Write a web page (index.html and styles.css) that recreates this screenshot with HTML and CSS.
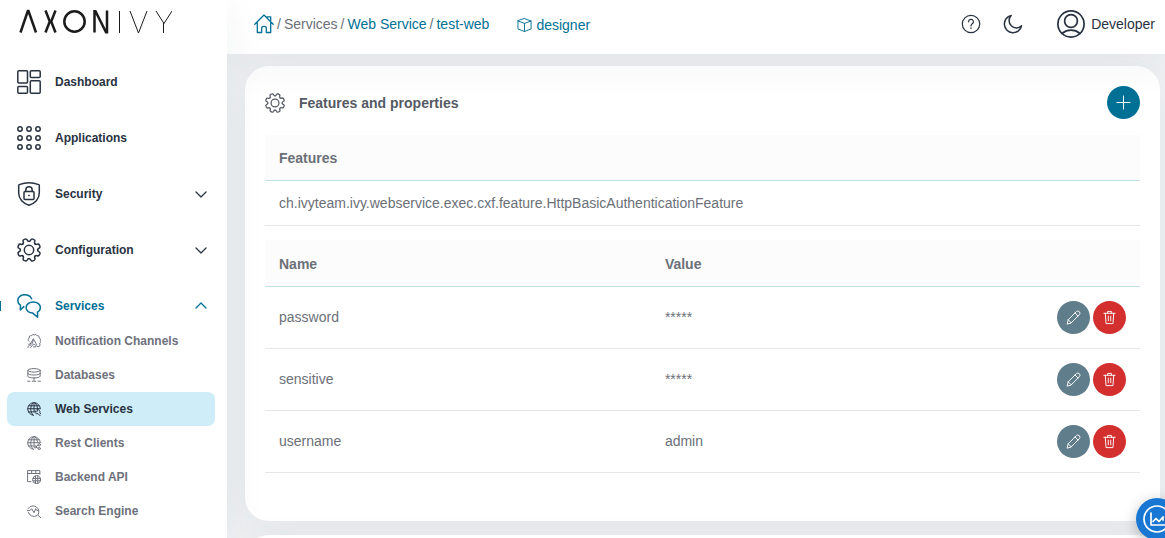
FILE: index.html
```html
<!DOCTYPE html>
<html lang="en">
<head>
<meta charset="utf-8">
<title>test-web</title>
<link rel="stylesheet" href="styles.css">
</head>
<body>
<svg class="defs" aria-hidden="true">
  <defs>
    <path id="tooth" d="M12 3.4Q13.2 3.4 13.6 2.2Q14.3.6 15.7 1.1L16.9 1.6Q18.3 2.2 17.7 3.8Q17.2 5 18.1 5.9"/>
    <symbol id="gear" viewBox="0 0 24 24">
      <use href="#tooth"/><use href="#tooth" transform="rotate(45 12 12)"/><use href="#tooth" transform="rotate(90 12 12)"/><use href="#tooth" transform="rotate(135 12 12)"/><use href="#tooth" transform="rotate(180 12 12)"/><use href="#tooth" transform="rotate(225 12 12)"/><use href="#tooth" transform="rotate(270 12 12)"/><use href="#tooth" transform="rotate(315 12 12)"/>
      <circle cx="12" cy="12" r="4.7"/>
    </symbol>
    <symbol id="down" viewBox="0 0 12 12"><path d="M1 4l5 5 5-5"/></symbol>
    <symbol id="up" viewBox="0 0 12 12"><path d="M1 8l5-5 5 5"/></symbol>
    <symbol id="pencil" viewBox="0 0 16 16"><path d="M1.300 14.700l1-4.300L11 1.800a2.200 2.200 0 0 1 3.200 3.200L5.600 13.700zM2.300 10.400l3.300 3.300M9.600 3.200l3.200 3.200"/></symbol>
    <symbol id="trash" viewBox="0 0 16 16"><path d="M2 3.500h12M3.500 3.500l.8 11h7.400l.8-11M6 3.500v-2h4v2M6.700 6.500v5M9.300 6.500v5"/></symbol>
    <symbol id="globe" viewBox="0 0 24 24"><path d="M11 22.700A10.800 10.800 0 1 1 22.800 11M10.500 22.700C5 17 5 7 10.500 1.300M13.500 1.300c3 3 4.400 6.200 4.500 10M1.500 11.500h21M3 6.500h18M2.500 17h9.500M12 1.500v14"/></symbol>
  </defs>
</svg>

<div class="shell">
  <aside class="sidebar">
    <a class="logo" href="#" aria-label="Axon Ivy">
      <svg viewBox="0 0 154 25" width="154" height="25">
        <g class="logo-bold"><path d="M2.500 23.500L9.800 2h.7L18 23.500"/><path d="M27.500 1.500l4.300 11-4.300 11M37.500 1.500l-4.300 11 4.300 11"/><circle cx="56.500" cy="12.500" r="10.200"/><path d="M76.500 23.500V2.200h1l10.500 21h1V1.500"/></g>
        <g class="logo-thin"><path d="M101.500 2v22M112 2l8.500 22L129 2M138 2l8 12.500L154 2M145.500 14v10"/></g>
      </svg>
    </a>
    <nav class="menu">
      <a class="item" href="#"><svg class="icon24" viewBox="0 0 24 24"><rect x=".8" y=".8" width="9.700" height="12.200" rx="1"/><rect x="13.300" y=".8" width="9.900" height="6.700" rx="1"/><rect x=".8" y="16.500" width="9.700" height="6.700" rx="1"/><rect x="13.300" y="10.800" width="9.900" height="12.400" rx="1"/></svg><span>Dashboard</span></a>
      <a class="item" href="#"><svg class="icon24" viewBox="0 0 24 24"><g><circle cx="3" cy="3" r="2.200"/><circle cx="12" cy="3" r="2.200"/><circle cx="21" cy="3" r="2.200"/><circle cx="3" cy="12" r="2.200"/><circle cx="12" cy="12" r="2.200"/><circle cx="21" cy="12" r="2.200"/><circle cx="3" cy="21" r="2.200"/><circle cx="12" cy="21" r="2.200"/><circle cx="21" cy="21" r="2.200"/></g></svg><span>Applications</span></a>
      <a class="item" href="#"><svg class="icon24" viewBox="0 0 24 24"><path d="M2.300 2.600q9.700-3.600 19.400 0a.9.900 0 0 1 .6.900V11c0 6-4.500 10.700-10.300 12.200C6.200 21.700 1.700 17 1.700 11V3.500a.9.900 0 0 1 .6-.9z"/><rect x="7" y="9.600" width="10" height="7.800" rx="1"/><path d="M8.800 9.600V8a3.200 3.200 0 0 1 6.400 0v1.600M11.800 13.500h.4"/></svg><span>Security</span><svg class="chevron"><use href="#down"/></svg></a>
      <a class="item" href="#"><svg class="icon24"><use href="#gear"/></svg><span>Configuration</span><svg class="chevron"><use href="#down"/></svg></a>
      <a class="item open" href="#"><svg class="icon24" viewBox="0 0 24 24"><path d="M14.600 4.800C13.500 2.300 10.900.7 7.800.7 3.900.7.800 3.200.8 6.400c0 2 1 3.600 2.700 4.700L3.300 16l3.500-3.400M16.300 8c4 0 7.100 2.400 7.100 5.500 0 2-1 3.700-2.900 4.700l.1 5-4.800-4.100c-3.900 0-6.700-2.500-6.700-5.600S12.200 8 16.300 8z"/></svg><span>Services</span><svg class="chevron"><use href="#up"/></svg></a>
      <div class="submenu">
        <a class="sub" href="#"><svg class="icon14" viewBox="0 0 24 24"><path d="M3.500 12.500A3 3 0 0 1 4 7a3 3 0 0 1 4-4 3 3 0 0 1 4.500-1.500A3 3 0 0 1 17 3a3 3 0 0 1 3.800 4 3 3 0 0 1 2 4.500 3 3 0 0 1-1.500 5 3 3 0 0 1-4.300 4.500M5.500 17L11 8.500l5.500 9.500M11 8.500L9.500 15M3 17.500c5-1.500 9-.5 13 2.500M1.500 23c.5-3 2-4 4.500-4M6 23l3.500-4M11 22h4"/></svg><span>Notification Channels</span></a>
        <a class="sub" href="#"><svg class="icon14" viewBox="0 0 24 24"><ellipse cx="12" cy="4" rx="10.500" ry="3"/><path d="M1.500 4v5c0 4 21 4 21 0V4M1.500 9v5c0 4 21 4 21 0V9M12 17v4M9 22.700h6M1 22.700h4M19 22.700h4"/></svg><span>Databases</span></a>
        <a class="sub current" href="#" aria-current="page"><svg class="icon14" viewBox="0 0 24 24"><use href="#globe"/><path d="M13.500 15.500a4 4 0 0 0 5.500 4.500l3.500 3.500M13.500 15.500l3 1.500 1.500-1.500-1-2.500a4.200 4.200 0 0 1 5 5.500l1.500 2"/></svg><span>Web Services</span></a>
        <a class="sub" href="#"><svg class="icon14" viewBox="0 0 24 24"><use href="#globe"/><circle cx="14" cy="18.500" r="2"/><circle cx="21" cy="15" r="2"/><circle cx="21" cy="21.500" r="2"/><path d="M16 17.500l3-1.500M16 19.500l3 1.500"/></svg><span>Rest Clients</span></a>
        <a class="sub" href="#"><svg class="icon14" viewBox="0 0 24 24"><path d="M7 20H1V1h21v6M1 6h21M8 1v5M15 1v5"/><circle cx="16.500" cy="16.500" r="6.700"/><path d="M10 14.500h13M10 18.500h13M14.500 10v13M18.500 10v13"/></svg><span>Backend API</span></a>
        <a class="sub" href="#"><svg class="icon14" viewBox="0 0 24 24"><path d="M2 7.500A10 10 0 1 1 18.500 19l5 4.500M2 14A10 10 0 0 0 17 20M0 11h5.500l2.500-3 4 7 3-7 2 3h2"/></svg><span>Search Engine</span></a>
      </div>
    </nav>
  </aside>

  <div class="page">
    <header class="topbar">
      <nav class="crumbs" aria-label="Breadcrumb">
        <a href="#" aria-label="Home"><svg class="home" viewBox="0 0 20 20"><path d="M.8 10.300L10 1l9.200 9.300M3.300 9v9.500h4.400v-4.300q0-1.800 2.300-1.800t2.300 1.800v4.300h4.400V9M13 2.800h3.700v4"/></svg></a>
        <span>/</span><span>Services</span><span>/</span><a href="#">Web Service</a><span>/</span><a href="#">test-web</a>
      </nav>
      <a class="app" href="#"><svg class="cube" viewBox="0 0 16 16"><path d="M8 1.200l7 2.500v8.500l-7 2.800-7-2.800V3.700zM1 3.700l7 2.600 7-2.600M8 6.300V15"/></svg><span>designer</span></a>
      <div class="tools">
        <button class="plain" type="button" aria-label="Help"><svg viewBox="0 0 20 20"><circle cx="10" cy="10" r="8.700"/><path d="M7.600 7.800a2.400 2.400 0 1 1 3.600 2q-1.200.8-1.200 2.100M10 13.800v.6"/></svg></button>
        <button class="plain" type="button" aria-label="Dark mode"><svg class="heavy" viewBox="0 0 20 20"><path d="M8.200 1.500A8.700 8.700 0 1 0 18.600 11.700 7.100 7.100 0 0 1 8.200 1.500z"/></svg></button>
        <button class="user" type="button"><svg viewBox="0 0 28 28"><circle cx="14" cy="14" r="13.100"/><circle cx="14" cy="11" r="6.400"/><path d="M5 23.500q4-3.300 9-3.300t9 3.300"/></svg><span>Developer</span></button>
      </div>
    </header>

    <main class="content">
      <section class="card">
        <div class="card-head">
          <svg class="card-icon"><use href="#gear"/></svg>
          <h1>Features and properties</h1>
          <button class="round add" type="button" aria-label="Add"><svg viewBox="0 0 16 16"><path d="M8 1v14M1 8h14"/></svg></button>
        </div>
        <table class="features">
          <thead><tr><th>Features</th></tr></thead>
          <tbody><tr><td>ch.ivyteam.ivy.webservice.exec.cxf.feature.HttpBasicAuthenticationFeature</td></tr></tbody>
        </table>
        <table class="props">
          <thead><tr><th class="name">Name</th><th>Value</th><th class="actions"></th></tr></thead>
          <tbody>
            <tr><td>password</td><td>*****</td><td><div class="buttons"><button class="round edit" type="button" aria-label="Edit password"><svg><use href="#pencil"/></svg></button><button class="round delete" type="button" aria-label="Delete password"><svg><use href="#trash"/></svg></button></div></td></tr>
            <tr><td>sensitive</td><td>*****</td><td><div class="buttons"><button class="round edit" type="button" aria-label="Edit sensitive"><svg><use href="#pencil"/></svg></button><button class="round delete" type="button" aria-label="Delete sensitive"><svg><use href="#trash"/></svg></button></div></td></tr>
            <tr><td>username</td><td>admin</td><td><div class="buttons"><button class="round edit" type="button" aria-label="Edit username"><svg><use href="#pencil"/></svg></button><button class="round delete" type="button" aria-label="Delete username"><svg><use href="#trash"/></svg></button></div></td></tr>
          </tbody>
        </table>
      </section>
      <section class="card"></section>
    </main>
  </div>
</div>
<button class="monitor" type="button" aria-label="Live stats"><svg viewBox="0 0 28 28"><circle cx="14" cy="14" r="13"/><path d="M8 8v12h14M10 16.500l3-3 3 3 4-4.500v3"/></svg></button>
</body>
</html>
```
FILE: styles.css
```css
* { box-sizing: border-box; }
html, body { height: 100%; margin: 0; overflow: hidden; }
body {
  background: #f0f2f4;
  color: #6b7078;
  font-family: "Liberation Sans", Arial, sans-serif;
  font-size: 14px;
  line-height: 16px;
}
a { color: #007095; text-decoration: none; }
button { border: 0; padding: 0; background: none; font: inherit; color: inherit; cursor: pointer; }
svg { display: block; flex: none; fill: none; stroke: currentColor; stroke-linecap: round; stroke-linejoin: round; }
.defs { position: absolute; width: 0; height: 0; }
.shell { display: flex; height: 100%; }

.sidebar {
  position: relative;
  z-index: 2;
  width: 227px;
  flex: none;
  background: #fff;
  box-shadow: 0 10px 40px rgba(41, 50, 65, .06);
}
.logo { display: block; padding: 9px 0 0 18px; color: #1b1b1b; }
.logo svg { stroke-linecap: butt; stroke-linejoin: miter; }
.logo-bold { stroke-width: 2.5; }
.logo-thin { stroke-width: 1; }
.menu { display: flex; flex-direction: column; gap: 20px; padding-top: 30px; font-size: 12px; font-weight: bold; }
.item { display: flex; align-items: center; gap: 14px; height: 36px; padding: 0 20px 0 17px; color: #293241; }
.item span { flex: 1; }
.item.open { color: #007095; }
.item.open::before { content: ""; width: 1px; height: 10px; margin: 0 2px 0 -17px; background: #007095; }
.icon24 { width: 24px; height: 24px; stroke-width: 1.5; }
.chevron { width: 12px; height: 12px; stroke-width: 1.3; }
.submenu { margin: -20px 12px 0 7px; }
.sub { display: flex; align-items: center; gap: 14px; height: 34px; padding-left: 20px; border-radius: 7px; color: #6e717c; }
.sub.current { background: #ceedf8; color: #293241; }
.icon14 { width: 14px; height: 14px; stroke-width: 1.7; }

.page { flex: 1; min-width: 0; display: flex; flex-direction: column; }
.topbar {
  position: relative;
  z-index: 1;
  flex: none;
  display: flex;
  align-items: center;
  height: 54px;
  padding: 0 10px 6px 27px;
  background: #fff;
  box-shadow: 0 10px 40px rgba(41, 50, 65, .06);
}
.crumbs { display: flex; align-items: center; gap: 3px; }
.home { width: 20px; height: 20px; stroke-width: 1.3; }
.app { display: flex; align-items: center; gap: 4px; margin: 2px 0 0 28px; }
.cube { width: 15px; height: 16px; stroke-width: 1; }
.tools { display: flex; align-items: center; gap: 22px; margin-left: auto; color: #293241; }
.plain svg { width: 20px; height: 20px; stroke-width: 1.2; }
.plain .heavy { stroke-width: 1.5; }
.user { display: flex; align-items: center; gap: 6px; margin-left: 12px; }
.user svg { width: 28px; height: 28px; stroke-width: 1.7; }

.content { flex: 1; min-height: 0; padding: 12px 5px 0 18px; }
.card {
  min-height: 120px;
  margin-bottom: 14px;
  padding: 20px 20px 48px;
  border-radius: 24px;
  background: #fff;
  box-shadow: 0 10px 40px rgba(41, 50, 65, .06);
}
.card-head { display: flex; align-items: center; gap: 14px; margin-bottom: 16px; color: #545a64; }
.card-head h1 { flex: 1; margin: 0; font-size: 14px; }
.card-icon { width: 20px; height: 20px; stroke-width: 1.5; }
.round { display: flex; align-items: center; justify-content: center; width: 33px; height: 33px; border-radius: 50%; color: #fff; }
.round svg { width: 15px; height: 15px; stroke-width: 1; }
.add { background: #007095; }
.edit { background: #607d8b; }
.delete { background: #d32f2f; }

table { width: 100%; border-collapse: separate; border-spacing: 0; }
th { height: 46px; padding: 0 14px; background: #fcfcfc; border-bottom: 1px solid #bfdfe9; text-align: left; }
td { height: 45px; padding: 0 14px; border-bottom: 1px solid #e6e7e9; }
.features { margin-bottom: 14px; }
.props { table-layout: fixed; }
.props th { height: 47px; padding-top: 2px; }
.props td { height: 62px; padding-bottom: 1px; }
.name { width: 44.1%; }
.actions { width: 98px; }
.buttons { display: flex; gap: 3px; justify-content: flex-end; }

.monitor {
  position: fixed;
  right: -13px;
  bottom: -2px;
  z-index: 3;
  display: flex;
  align-items: center;
  justify-content: center;
  width: 42px;
  height: 42px;
  border-radius: 50%;
  background: #1976d2;
  color: #fff;
  box-shadow: 0 3px 14px rgba(0, 0, 0, .25);
}
.monitor svg { width: 28px; height: 28px; stroke-width: 1.7; }
```
